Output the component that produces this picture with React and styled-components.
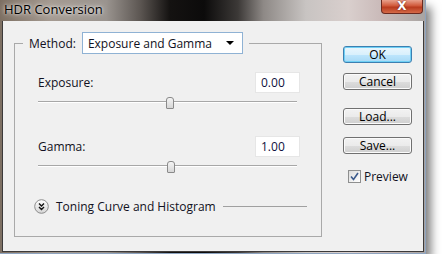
import React from 'react';
import styled, { createGlobalStyle } from 'styled-components';

const GlobalStyle = createGlobalStyle`
  html, body {
    margin: 0;
    padding: 0;
    background: #ffffff;
  }
  body {
    font-family: "Open Sans", "Noto Sans", sans-serif;
    font-size: 12px;
    color: #111122;
  }
`;

const Window = styled.div`
  width: 426px;
  height: 254px;
  display: flex;
  flex-direction: column;
  box-sizing: border-box;
  background: linear-gradient(
    90deg,
    #7d6f62 0%,
    #a59b92 12%,
    #9a948f 25%,
    #5c5652 33%,
    #141211 40%,
    #0c0b0b 48%,
    #3c3937 56%,
    #8e8986 62%,
    #c8c4c2 72%,
    #d9cfcd 82%,
    #c9b9b8 90%,
    #a8a4a2 100%
  );
  box-shadow: 5px 7px 9px rgba(0, 0, 0, 0.5);
  border-right: 1px solid #8ea4c0;
  border-bottom: 1px solid #8ea4c0;
`;

const TitleBar = styled.div`
  height: 21px;
  display: flex;
  justify-content: space-between;
  align-items: flex-start;
  padding: 0 2px 0 4px;
`;

const Title = styled.span`
  font-size: 13px;
  line-height: 18px;
  color: #000;
  text-shadow: 0 0 6px rgba(255, 255, 255, 0.9), 0 0 3px rgba(255, 255, 255, 0.8);
`;

const CloseButton = styled.div`
  width: 40px;
  height: 13px;
  border: 1px solid #6b2a20;
  border-top: none;
  border-radius: 0 0 4px 4px;
  background: linear-gradient(180deg, #e8a08c 0%, #d0583a 45%, #b83a1e 55%, #d56a48 100%);
  display: flex;
  align-items: center;
  justify-content: center;
  color: #fff;
  font-family: "DejaVu Sans", sans-serif;
  font-weight: bold;
  font-size: 12px;
  line-height: 11px;
  text-shadow: 0 0 2px #5a1a10;
`;

const Body = styled.div`
  flex: 1;
  display: flex;
  margin: 0 1px 1px 2px;
  border: 1px solid #3c3a3a;
  border-top: none;
  background: #f0f0f0;
  padding: 11px 0 0 11px;
`;

const Group = styled.fieldset`
  width: 308px;
  height: 205px;
  box-sizing: border-box;
  margin: 0;
  padding: 0;
  border: 1px solid #a9a9a9;
`;

const Legend = styled.legend`
  margin-left: 8px;
  padding: 0 6px 0 6px;
  display: flex;
  align-items: center;
  gap: 6px;
`;

const Inner = styled.div`
  display: flex;
  flex-direction: column;
  padding: 0 21px 0 23px;
`;

const Select = styled.div`
  width: 161px;
  height: 22px;
  box-sizing: border-box;
  background: #fff;
  border: 1px solid #8fb2d4;
  display: flex;
  align-items: center;
  justify-content: space-between;
  padding: 0 8px 0 5px;
`;

const Caret = styled.span`
  width: 0;
  height: 0;
  border-left: 4px solid transparent;
  border-right: 4px solid transparent;
  border-top: 4px solid #000;
`;

const FieldRow = styled.div`
  display: flex;
  align-items: center;
  justify-content: space-between;
  margin-top: ${(p) => p.$top}px;
`;

const NumberBox = styled.div`
  width: 45px;
  height: 21px;
  box-sizing: border-box;
  background: #fff;
  border: 1px solid #e6e6e6;
  padding-left: 5px;
  line-height: 19px;
  color: #101040;
`;

const Track = styled.div`
  position: relative;
  height: 12px;
  margin-top: 4px;
  &::before {
    content: '';
    position: absolute;
    left: 0;
    right: 3px;
    top: 4px;
    height: 1px;
    background: #a7a7a7;
    border-bottom: 1px solid #ffffff;
  }
`;

const Thumb = styled.div`
  position: absolute;
  top: 0;
  left: ${(p) => p.$pos}px;
  width: 6px;
  height: 10px;
  border: 1px solid #8a8a8a;
  border-radius: 3px 3px 1px 1px;
  background: linear-gradient(180deg, #f4f4f4, #d6d6d6);
`;

const Toning = styled.div`
  display: flex;
  align-items: center;
  margin-top: 25px;
  margin-left: -4px;
  gap: 7px;
`;

const Rule = styled.div`
  flex: 1;
  height: 1px;
  background: #a0a0a0;
  margin: 0 -7px 0 0;
`;

const Side = styled.div`
  display: flex;
  flex-direction: column;
  margin-left: 21px;
  padding-top: 14px;
  width: 69px;
`;

const Button = styled.div`
  height: 17px;
  box-sizing: border-box;
  border: 1px solid ${(p) => (p.$default ? '#3c7fb1' : '#707070')};
  border-radius: 3px;
  background: ${(p) =>
    p.$default
      ? 'linear-gradient(180deg, #eaf6fd 0%, #d9f0fc 50%, #bee6fd 51%, #a7d9f5 100%)'
      : 'linear-gradient(180deg, #f2f2f2 0%, #ebebeb 50%, #dddddd 51%, #cfcfcf 100%)'};
  box-shadow: ${(p) => (p.$default ? 'inset 0 0 0 1px #6fd0f5' : 'inset 0 0 0 1px #fbfbfb')};
  text-align: center;
  line-height: 15px;
  color: #000;
  margin-top: ${(p) => p.$top || 0}px;
`;

const Check = styled.label`
  display: flex;
  align-items: center;
  gap: 3px;
  margin: 14px 0 0 5px;
`;

const Box = styled.span`
  width: 11px;
  height: 11px;
  border: 1px solid #8e8f8f;
  background: linear-gradient(135deg, #dcdcdc, #ffffff);
  display: flex;
  align-items: center;
  justify-content: center;
`;

function Slider({ pos }) {
  return (
    <Track>
      <Thumb $pos={pos} />
    </Track>
  );
}

export default function App() {
  return (
    <>
      <GlobalStyle />
      <Window>
        <TitleBar>
          <Title>HDR Conversion</Title>
          <CloseButton>X</CloseButton>
        </TitleBar>
        <Body>
          <Group>
            <Legend>
              <span>Method:</span>
              <Select>
                <span>Exposure and Gamma</span>
                <Caret />
              </Select>
            </Legend>
            <Inner>
              <FieldRow $top={18}>
                <span>Exposure:</span>
                <NumberBox>0.00</NumberBox>
              </FieldRow>
              <Slider pos={128} />
              <FieldRow $top={27}>
                <span>Gamma:</span>
                <NumberBox>1.00</NumberBox>
              </FieldRow>
              <Slider pos={129} />
              <Toning>
                <svg width="15" height="15" viewBox="0 0 15 15">
                  <defs>
                    <linearGradient id="tg" x1="0" y1="0" x2="0" y2="1">
                      <stop offset="0" stopColor="#ffffff" />
                      <stop offset="1" stopColor="#d4d4d4" />
                    </linearGradient>
                  </defs>
                  <circle cx="7.5" cy="7.5" r="6.8" fill="url(#tg)" stroke="#8c8c8c" />
                  <path d="M5 4.5 L7.5 7 L10 4.5 M5 8 L7.5 10.5 L10 8" fill="none" stroke="#111" strokeWidth="1.4" />
                </svg>
                <span>Toning Curve and Histogram</span>
                <Rule />
              </Toning>
            </Inner>
          </Group>
          <Side>
            <Button $default>OK</Button>
            <Button $top={10}>Cancel</Button>
            <Button $top={18}>Load...</Button>
            <Button $top={12}>Save...</Button>
            <Check>
              <Box>
                <svg width="9" height="9" viewBox="0 0 9 9">
                  <path d="M1 4.5 L3.5 7.5 L8 1" fill="none" stroke="#3b5a8c" strokeWidth="1.6" />
                </svg>
              </Box>
              <span>Preview</span>
            </Check>
          </Side>
        </Body>
      </Window>
    </>
  );
}
